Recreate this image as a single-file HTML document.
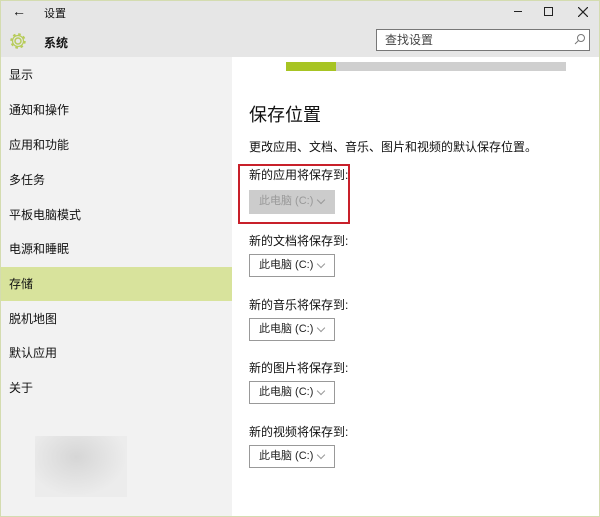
<!DOCTYPE html><html><head><meta charset="utf-8"><style>
*{margin:0;padding:0;box-sizing:border-box}
body{width:600px;height:517px;position:relative;overflow:hidden;background:#fff;font-family:"Liberation Sans","Noto Sans CJK SC",sans-serif;font-size:12px;color:#111}
.a{position:absolute}
.top{left:0;top:0;width:600px;height:57px;background:#e6e6e6}
.side{left:0;top:57px;width:232px;height:460px;background:#f2f2f2}
.it{left:9px;font-size:12px;line-height:16px}
.dd{left:249px;width:86px;height:23px;border:1px solid #999;background:#fff;font-size:11px;line-height:21px;padding-left:9px;color:#222}
.dd:after{content:"";position:absolute;right:10px;top:6px;width:5px;height:5px;border-right:1px solid #999;border-bottom:1px solid #999;transform:rotate(45deg)}
.lb{left:249px;font-size:12px;line-height:16px}
</style></head><body>
<div class="a top"></div>
<div class="a side"></div>
<div class="a" style="left:12px;top:3px;font-size:14px">←</div>
<div class="a" style="left:44px;top:5px;font-size:11px">设置</div>
<div class="a" style="left:514px;top:11px;width:8px;height:1px;background:#222"></div>
<div class="a" style="left:544px;top:7px;width:9px;height:9px;border:1px solid #222"></div>
<svg class="a" style="left:578px;top:7px" width="10" height="10"><path d="M0 0L10 10M10 0L0 10" stroke="#222" stroke-width="1.2"/></svg>
<svg class="a" style="left:8px;top:31px" width="20" height="20" viewBox="0 0 20 20"><circle cx="10" cy="10" r="3" fill="none" stroke="#b7cc5a" stroke-width="1.5"/><circle cx="10" cy="10" r="6.5" fill="none" stroke="#b7cc5a" stroke-width="2.5" stroke-dasharray="2.5 2.6"/><circle cx="10" cy="10" r="5.5" fill="none" stroke="#b7cc5a" stroke-width="1.2"/></svg>
<div class="a" style="left:44px;top:34px;font-size:12px;font-weight:bold">系统</div>
<div class="a" style="left:376px;top:29px;width:214px;height:22px;border:1px solid #777;background:#fff;font-size:12px;line-height:20px;padding-left:8px;color:#444">查找设置</div>
<svg class="a" style="left:574px;top:33px" width="12" height="12"><circle cx="7" cy="5" r="3.5" fill="none" stroke="#777"/><path d="M4.5 7.5L1 11" stroke="#777"/></svg>
<div class="a" style="left:0;top:267px;width:232px;height:34px;background:#d8e39c"></div>
<div class="a it" style="top:67px">显示</div>
<div class="a it" style="top:102px">通知和操作</div>
<div class="a it" style="top:137px">应用和功能</div>
<div class="a it" style="top:172px">多任务</div>
<div class="a it" style="top:207px">平板电脑模式</div>
<div class="a it" style="top:241px">电源和睡眠</div>
<div class="a it" style="top:276px">存储</div>
<div class="a it" style="top:311px">脱机地图</div>
<div class="a it" style="top:345px">默认应用</div>
<div class="a it" style="top:380px">关于</div>
<div class="a" style="left:35px;top:436px;width:92px;height:61px;background:radial-gradient(ellipse at 45% 35%,#d6d6d6,#ececec 70%)"></div>
<div class="a" style="left:286px;top:62px;width:280px;height:9px;background:#cfcfcf"></div>
<div class="a" style="left:286px;top:62px;width:50px;height:9px;background:#a7c423"></div>
<div class="a" style="left:249px;top:103px;font-size:18px;line-height:24px">保存位置</div>
<div class="a" style="left:249px;top:138px;font-size:12px">更改应用、文档、音乐、图片和视频的默认保存位置。</div>
<div class="a" style="left:238px;top:164px;width:112px;height:60px;border:2px solid #c8202a"></div>
<div class="a lb" style="top:167px">新的应用将保存到:</div>
<div class="a dd" style="top:190px;height:24px;border-color:#ccc;background:#cccccc;color:#999">此电脑 (C:)</div>
<div class="a lb" style="top:233px">新的文档将保存到:</div>
<div class="a dd" style="top:254px">此电脑 (C:)</div>
<div class="a lb" style="top:297px">新的音乐将保存到:</div>
<div class="a dd" style="top:318px">此电脑 (C:)</div>
<div class="a lb" style="top:360px">新的图片将保存到:</div>
<div class="a dd" style="top:381px">此电脑 (C:)</div>
<div class="a lb" style="top:424px">新的视频将保存到:</div>
<div class="a dd" style="top:445px">此电脑 (C:)</div>
<div class="a" style="left:0;top:0;width:600px;height:517px;border:1px solid #d4dcb0"></div>
</body></html>
